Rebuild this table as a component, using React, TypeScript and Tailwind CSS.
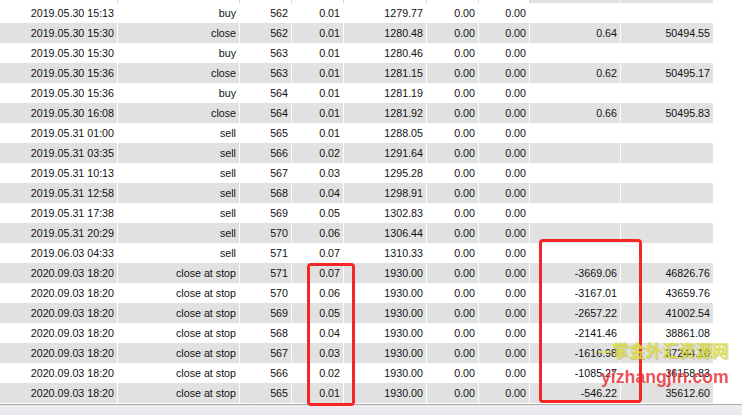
const widths = ['w-[118px]', 'w-[122px]', 'w-[52px]', 'w-[52px]', 'w-[83px]', 'w-[52px]', 'w-[51px]', 'w-[91px]', 'w-[93px]'];

type Row = string[];

const rows: Row[] = [
  ['2019.05.30 15:13', 'buy', '562', '0.01', '1279.77', '0.00', '0.00', '', ''],
  ['2019.05.30 15:30', 'close', '562', '0.01', '1280.48', '0.00', '0.00', '0.64', '50494.55'],
  ['2019.05.30 15:30', 'buy', '563', '0.01', '1280.46', '0.00', '0.00', '', ''],
  ['2019.05.30 15:36', 'close', '563', '0.01', '1281.15', '0.00', '0.00', '0.62', '50495.17'],
  ['2019.05.30 15:36', 'buy', '564', '0.01', '1281.19', '0.00', '0.00', '', ''],
  ['2019.05.30 16:08', 'close', '564', '0.01', '1281.92', '0.00', '0.00', '0.66', '50495.83'],
  ['2019.05.31 01:00', 'sell', '565', '0.01', '1288.05', '0.00', '0.00', '', ''],
  ['2019.05.31 03:35', 'sell', '566', '0.02', '1291.64', '0.00', '0.00', '', ''],
  ['2019.05.31 10:13', 'sell', '567', '0.03', '1295.28', '0.00', '0.00', '', ''],
  ['2019.05.31 12:58', 'sell', '568', '0.04', '1298.91', '0.00', '0.00', '', ''],
  ['2019.05.31 17:38', 'sell', '569', '0.05', '1302.83', '0.00', '0.00', '', ''],
  ['2019.05.31 20:29', 'sell', '570', '0.06', '1306.44', '0.00', '0.00', '', ''],
  ['2019.06.03 04:33', 'sell', '571', '0.07', '1310.33', '0.00', '0.00', '', ''],
  ['2020.09.03 18:20', 'close at stop', '571', '0.07', '1930.00', '0.00', '0.00', '-3669.06', '46826.76'],
  ['2020.09.03 18:20', 'close at stop', '570', '0.06', '1930.00', '0.00', '0.00', '-3167.01', '43659.76'],
  ['2020.09.03 18:20', 'close at stop', '569', '0.05', '1930.00', '0.00', '0.00', '-2657.22', '41002.54'],
  ['2020.09.03 18:20', 'close at stop', '568', '0.04', '1930.00', '0.00', '0.00', '-2141.46', '38861.08'],
  ['2020.09.03 18:20', 'close at stop', '567', '0.03', '1930.00', '0.00', '0.00', '-1616.98', '37244.10'],
  ['2020.09.03 18:20', 'close at stop', '566', '0.02', '1930.00', '0.00', '0.00', '-1085.27', '36158.83'],
  ['2020.09.03 18:20', 'close at stop', '565', '0.01', '1930.00', '0.00', '0.00', '-546.22', '35612.60'],
];

export default function App() {
  return (
    <div className="relative w-[742px] h-[415px] overflow-hidden bg-white flex flex-col font-['Liberation_Sans',Arial,sans-serif] text-[10.7px] text-[#111]">
      {/* partial row cut off at the top */}
      <div className="flex h-[3px] shrink-0">
        {widths.map((w, i) => (
          <div
            key={i}
            className={`${w} shrink-0 ${i >= 7 ? 'bg-[#e1e1e1] border-r border-white' : 'bg-white border-r border-[#d6d6d6]'}`}
          />
        ))}
      </div>

      {rows.map((row, r) => (
        <div key={r} className={`flex h-[20px] shrink-0 ${r % 2 === 1 ? 'bg-[#e1e1e1]' : 'bg-white'} w-[714px]`}>
          {row.map((cell, c) => (
            <div
              key={c}
              className={`${widths[c]} shrink-0 border-r border-white flex items-center justify-end pr-[3px] pt-px whitespace-nowrap`}
            >
              {cell}
            </div>
          ))}
        </div>
      ))}

      <div className="h-px bg-white shrink-0" />
      <div className="h-px bg-[#a9a9a9] shrink-0" />
      <div className="flex-1 bg-gradient-to-b from-[#eeedf3] to-[#e8e6ef]" />

      {/* red annotation boxes */}
      <div className="absolute left-[307px] top-[263px] w-[48px] h-[143px] border-[3px] border-[#f52626] rounded-[4px]" />
      <div className="absolute left-[539px] top-[239px] w-[103px] h-[164px] border-[3px] border-[#f52626] rounded-[4px]" />

      {/* watermark */}
      <div className="absolute left-[598px] top-[351px] w-[13px] h-[2px] bg-[#e3e14a]/80" />
      <div className="absolute left-[612px] top-[338px] font-['Noto_Sans_CJK_SC',sans-serif] font-bold text-[16.7px] leading-[24px] text-[#dfdd3c]/85 tracking-[0px] [text-shadow:1px_1px_0_rgba(150,150,60,0.35)]">
        掌金外汇资源网
      </div>
      <div className="absolute left-[601px] top-[366px] font-['Liberation_Sans',Arial,sans-serif] font-bold text-[17.7px] leading-[22px] text-[#e8323a]/85">
        yizhangjin.com
      </div>
    </div>
  );
}
